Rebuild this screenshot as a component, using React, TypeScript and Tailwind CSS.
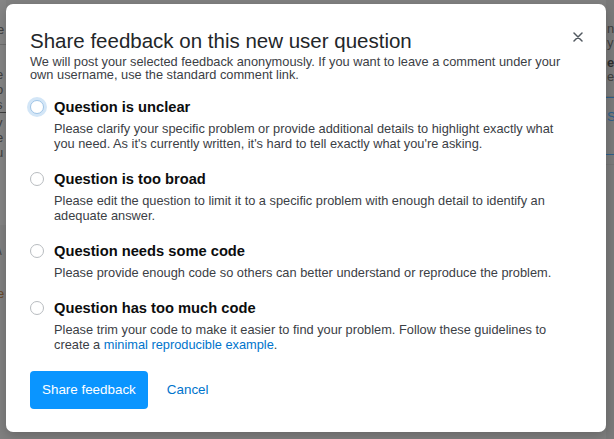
import React from "react";

const items = [
  {
    label: "Question is unclear",
    desc: (
      <>
        Please clarify your specific problem or provide additional details to highlight exactly what
        you need. As it's currently written, it's hard to tell exactly what you're asking.
      </>
    ),
    focus: true,
  },
  {
    label: "Question is too broad",
    desc: (
      <>
        Please edit the question to limit it to a specific problem with enough detail to identify an
        adequate answer.
      </>
    ),
  },
  {
    label: "Question needs some code",
    desc: <>Please provide enough code so others can better understand or reproduce the problem.</>,
  },
  {
    label: "Question has too much code",
    desc: (
      <>
        Please trim your code to make it easier to find your problem. Follow these guidelines to
        create a <span className="text-[#0074cc]">minimal reproducible example</span>.
      </>
    ),
  },
];

function Radio({ focus }: { focus?: boolean }) {
  return (
    <div className="relative mt-[2px] h-[14px] w-[14px] shrink-0">
      {focus && <div className="absolute -inset-[3px] rounded-full bg-[#d3e6f7]" />}
      <div
        className={
          "absolute inset-0 rounded-full border bg-white " +
          (focus ? "border-[#9fc4e6]" : "border-[#b8bcc0]")
        }
      />
    </div>
  );
}

export default function App() {
  return (
    <div
      className="flex h-[439px] w-[614px] overflow-hidden bg-[#808080]"
      style={{ fontFamily: '"Liberation Sans", Arial, sans-serif' }}
    >
      {/* left strip of dimmed page */}
      <div className="flex w-[6px] shrink-0 flex-col overflow-hidden text-[13px] leading-[15px] text-[#3f3f3f]">
        <div className="h-[45px] border-b border-[#6e6e6e] bg-[#858585] pt-[22px] whitespace-nowrap">
          <span className="-ml-[3px]">e</span>
        </div>
        <div className="h-[180px] bg-[#858585] pt-[22px] whitespace-nowrap">
          <div className="-ml-[4px]">e</div>
          <div className="-ml-[4px]">o</div>
          <div className="-ml-[4px] border-b border-[#3f3f3f]">s</div>
          <div className="-ml-[4px] mt-[2px]">v</div>
          <div className="-ml-[4px]">e</div>
          <div className="-ml-[4px]">u</div>
        </div>
        <div className="mt-[18px] -ml-[2px] text-[#3f3f3f]">\</div>
        <div className="mt-[28px] -ml-[3px] text-[#6b4a2a]">e</div>
      </div>

      {/* modal */}
      <div className="relative mt-[4px] h-[428px] w-[600px] shrink-0 rounded-[7px] bg-white px-[24px] pt-[24px] shadow-[0_4px_12px_rgba(0,0,0,0.2)]">
        <button className="absolute right-[23px] top-[28px] flex h-[10px] w-[10px] items-center justify-center">
          <svg width="10" height="10" viewBox="0 0 10 10">
            <path d="M1 1 L9 9 M9 1 L1 9" stroke="#525960" strokeWidth="1.5" strokeLinecap="round" />
          </svg>
        </button>
        <h1 className="text-[20.5px] leading-[25px] font-normal text-[#232629]">
          Share feedback on this new user question
        </h1>
        <p className="mt-[2px] w-[535px] text-[12.8px] leading-[13px] text-[#3b4045]">
          We will post your selected feedback anonymously. If you want to leave a comment under your
          own username, use the standard comment link.
        </p>
        <div className="mt-[17px] flex flex-col gap-[19px]">
          {items.map((it, i) => (
            <div key={i} className="flex gap-[10px]">
              <Radio focus={it.focus} />
              <div className="flex w-[510px] flex-col">
                <div className="text-[14.7px] leading-[19px] font-bold text-[#0c0d0e]">{it.label}</div>
                <div className="mt-[4px] text-[12.8px] leading-[15px] text-[#3b4045]">{it.desc}</div>
              </div>
            </div>
          ))}
        </div>
        <div className="mt-[19px] flex items-center">
          <button className="flex h-[38px] items-center rounded-[4px] bg-[#0a95ff] px-[12px] text-[13.4px] text-white">
            Share feedback
          </button>
          <button className="ml-[7px] flex h-[38px] items-center px-[12px] text-[13.4px] text-[#0074cc]">
            Cancel
          </button>
        </div>
      </div>

      {/* right strip of dimmed page */}
      <div className="flex w-[8px] shrink-0 flex-col overflow-hidden text-[13px] leading-[14px] text-[#3f3f3f] whitespace-nowrap">
        <div className="h-[97px] border-b border-[#6e6e6e] bg-[#7a7a7a] pt-[22px]">
          <div className="ml-[1px]">n</div>
          <div className="ml-[1px]">y</div>
          <div className="mt-[6px] ml-[1px] font-bold text-[#2f2f2f]">e</div>
          <div className="ml-[1px]">el</div>
        </div>
        <div className="h-[58px] border-y border-[#2f5f8a] bg-[#7a7a7a] pt-[12px]">
          <div className="ml-[1px] text-[#2f5f8a]">S</div>
        </div>
        <div className="h-[10px] border-b border-[#737373] bg-[#7a7a7a]" />
        <div className="flex-1 bg-[#7a7a7a]" />
      </div>
    </div>
  );
}
